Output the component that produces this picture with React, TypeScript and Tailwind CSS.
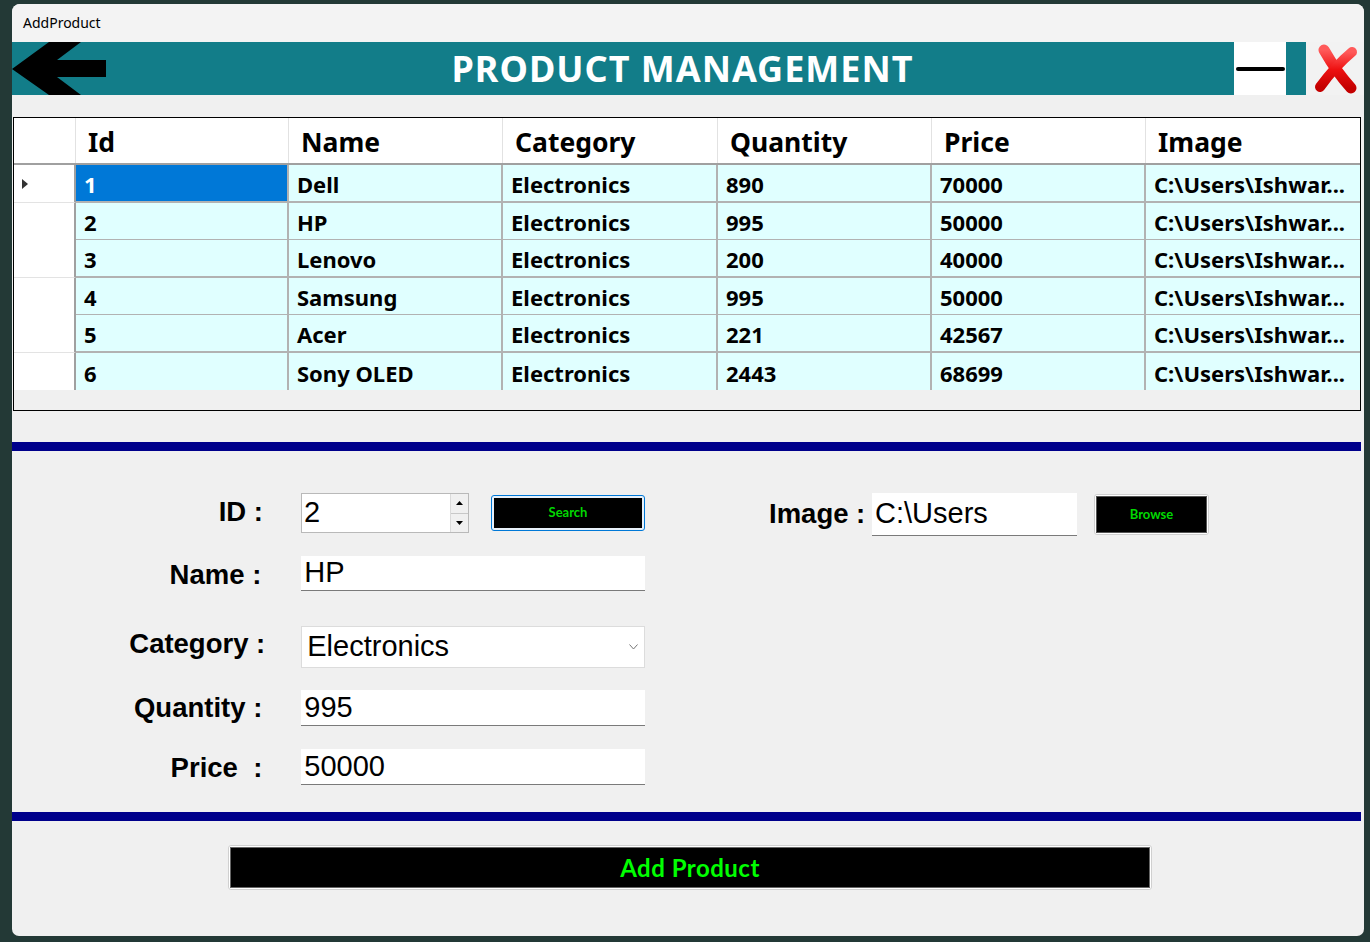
import React from "react";

const rows = [
  ["1", "Dell", "Electronics", "890", "70000"],
  ["2", "HP", "Electronics", "995", "50000"],
  ["3", "Lenovo", "Electronics", "200", "40000"],
  ["4", "Samsung", "Electronics", "995", "50000"],
  ["5", "Acer", "Electronics", "221", "42567"],
  ["6", "Sony OLED", "Electronics", "2443", "68699"],
];

const rowHeights = ["h-[38px]", "h-[37px]", "h-[38px]", "h-[37px]", "h-[38px]", "h-[37px]"];

const headers = ["Id", "Name", "Category", "Quantity", "Price", "Image"];

function Arrow() {
  return (
    <svg width="94" height="53" viewBox="0 0 94 53">
      <polygon points="0,27 37,0 69,0 45,18 94,18 94,35 45,35 69,53 37,53" fill="#000" />
    </svg>
  );
}

function CloseX() {
  return (
    <svg width="58" height="53" viewBox="0 0 58 53">
      <defs>
        <linearGradient id="rg" x1="0" y1="0" x2="0" y2="1">
          <stop offset="0" stopColor="#ff5a5a" />
          <stop offset="0.5" stopColor="#ee1111" />
          <stop offset="1" stopColor="#c40000" />
        </linearGradient>
      </defs>
      <path d="M18 8 C 26 22, 34 34, 45 46" stroke="url(#rg)" strokeWidth="11" strokeLinecap="round" fill="none" />
      <path d="M46 10 C 34 20, 22 34, 14 45" stroke="url(#rg)" strokeWidth="10" strokeLinecap="round" fill="none" />
    </svg>
  );
}

export default function App() {
  const label = "font-['Liberation_Sans',Arial,sans-serif] font-bold text-[27.5px] text-black";
  const inputText = "font-['Liberation_Sans',Arial,sans-serif] text-[29px] text-black";
  return (
    <div className="w-[1370px] h-[942px] bg-[#233936] pt-[4px] pl-[12px] overflow-hidden">
      <div className="w-[1352px] h-[932px] bg-[#f0f0f0] rounded-t-[8px] rounded-b-[7px] flex flex-col overflow-hidden">
        {/* title bar */}
        <div className="h-[38px] bg-[#f3f3f3] pl-[11px] pb-[2px] flex items-center font-['Noto_Sans',sans-serif] text-[14px] text-black">
          AddProduct
        </div>
        {/* header */}
        <div className="h-[53px] flex bg-[#127d89]">
          <div className="w-[94px] h-full">
            <Arrow />
          </div>
          <div className="flex-1 flex items-center justify-center pl-[25px] font-['Noto_Sans',sans-serif] font-bold text-[36px] text-white tracking-[1px]">
            PRODUCT MANAGEMENT
          </div>
          <div className="w-[52px] h-full bg-white flex items-center justify-center">
            <div className="w-[49px] h-[4px] bg-black rounded-full"></div>
          </div>
          <div className="w-[20px] h-full bg-[#127d89]"></div>
          <div className="w-[58px] h-full bg-[#f2f2f2]">
            <CloseX />
          </div>
        </div>
        <div className="h-[22px]"></div>
        {/* table */}
        <div className="ml-[1px] w-[1348px] h-[294px] border border-black bg-[#f0f0f0] font-['Noto_Sans',sans-serif] font-bold">
          <div className="grid grid-cols-[62px_213px_214px_215px_214px_214px_1fr] h-[47px] bg-white border-b-2 border-[#a0a0a0]">
            <div className="border-r border-[#e2e2e2]"></div>
            {headers.map((h, i) => (
              <div key={h} className={`pl-[12px] pt-[4px] flex items-center text-[26.5px] text-black ${i < 5 ? "border-r border-[#e2e2e2]" : ""}`}>
                {h}
              </div>
            ))}
          </div>
          {rows.map((r, ri) => (
            <div key={ri} className={`grid grid-cols-[62px_213px_214px_215px_214px_214px_1fr] ${rowHeights[ri]}`}>
              <div className={`bg-white border-r-2 border-r-[#a0a0a0] flex items-center pl-[8px] ${ri < 5 ? "border-b border-b-[#e3e3e3]" : ""}`}>
                {ri === 0 && (
                  <svg width="6" height="10" viewBox="0 0 6 10">
                    <polygon points="0,0 6,5 0,10" fill="#333" />
                  </svg>
                )}
              </div>
              {[...r, "C:\\Users\\Ishwar..."].map((c, ci) => {
                const sel = ri === 0 && ci === 0;
                return (
                  <div
                    key={ci}
                    className={`flex items-center pl-[8px] pt-[3px] text-[22px] border-[#b2b2b2] ${ri < 5 ? "border-b-2" : ""} ${ci < 5 ? "border-r-2" : ""} ${sel ? "bg-[#0078d7] text-white" : "bg-[#e0ffff] text-black"}`}
                  >
                    {c}
                  </div>
                );
              })}
            </div>
          ))}
        </div>
        {/* blue line */}
        <div className="mt-[31px] w-[1349px] h-[9px] bg-[#00008b]"></div>
        {/* form */}
        <div className="h-[361px] flex">
          <div className="w-[633px] flex flex-col pt-[42px]">
            <div className="h-[40px] flex items-center">
              <div className={`w-[251px] text-right pb-[3px] ${label}`}>ID :</div>
              <div className="ml-[38px] w-[168px] h-[40px] bg-white border border-[#b9b9b9] flex">
                <div className={`flex-1 flex items-center pl-[2px] ${inputText}`}>2</div>
                <div className="w-[18px] flex flex-col border-l border-[#dadada]">
                  <div className="flex-1 flex items-center justify-center bg-[#f0f0f0] border-b border-[#c8c8c8]">
                    <svg width="7" height="4" viewBox="0 0 7 4"><polygon points="0,4 3.5,0 7,4" fill="#000" /></svg>
                  </div>
                  <div className="flex-1 flex items-center justify-center bg-[#f0f0f0]">
                    <svg width="7" height="4" viewBox="0 0 7 4"><polygon points="0,0 7,0 3.5,4" fill="#000" /></svg>
                  </div>
                </div>
              </div>
              <div className="ml-[22px] w-[154px] h-[36px] rounded-[3px] border border-[#0078d7] bg-[#e8f1fa] p-[2px]">
                <div className="w-full h-full bg-black flex items-center justify-center font-['Lato',sans-serif] font-bold text-[13px] text-[#00d800]">
                  Search
                </div>
              </div>
            </div>
            <div className="mt-[23px] h-[35px] flex items-center">
              <div className={`w-[251px] text-right pt-[3px] ${label}`}>Name :</div>
              <div className={`ml-[40px] w-[346px] h-[35px] bg-white border-b border-[#7a7a7a] flex items-center pl-[3px] ${inputText}`}>HP</div>
            </div>
            <div className="mt-[35px] h-[42px] flex items-center">
              <div className={`w-[255px] text-right pb-[7px] ${label}`}>Category :</div>
              <div className={`ml-[36px] w-[346px] h-[42px] bg-white border border-[#dcdcdc] flex items-center pl-[5px] pr-[6px] ${inputText}`}>
                <span className="flex-1">Electronics</span>
                <svg width="9" height="6" viewBox="0 0 9 6"><polyline points="0.5,0.5 4.5,5 8.5,0.5" stroke="#777" strokeWidth="1" fill="none" /></svg>
              </div>
            </div>
            <div className="mt-[22px] h-[36px] flex items-center">
              <div className={`w-[252px] text-right ${label}`}>Quantity :</div>
              <div className={`ml-[39px] w-[346px] h-[36px] bg-white border-b border-[#7a7a7a] flex items-center pl-[3px] ${inputText}`}>995</div>
            </div>
            <div className="mt-[23px] h-[36px] flex items-center">
              <div className={`w-[252px] text-right whitespace-pre pt-[2px] ${label}`}>Price  :</div>
              <div className={`ml-[39px] w-[346px] h-[36px] bg-white border-b border-[#7a7a7a] flex items-center pl-[3px] ${inputText}`}>50000</div>
            </div>
          </div>
          <div className="ml-[124px] pt-[42px]">
            <div className="h-[43px] flex items-center">
              <div className={`w-[103px] pb-[2px] ${label}`}>Image :</div>
              <div className={`w-[205px] h-[43px] bg-white border-b border-[#7a7a7a] flex items-center pl-[3px] ${inputText}`}>C:\Users</div>
              <div className="ml-[17px] w-[115px] h-[41px] rounded-[3px] border border-[#d0d0d0] bg-white p-[1px]">
                <div className="w-full h-full bg-black border border-[#555] flex items-center justify-center font-['Lato',sans-serif] font-bold text-[13px] text-[#00d800]">
                  Browse
                </div>
              </div>
            </div>
          </div>
        </div>
        {/* blue line 2 */}
        <div className="w-[1349px] h-[9px] bg-[#00008b]"></div>
        {/* add button */}
        <div className="mt-[24px] ml-[216px] w-[924px] h-[45px] rounded-[3px] border border-[#d0d0d0] bg-white p-[1px]">
          <div className="w-full h-full bg-black border border-[#666] flex items-center justify-center font-['Lato',sans-serif] font-bold text-[24px] text-[#00ff00] tracking-[0.5px]">
            Add Product
          </div>
        </div>
      </div>
    </div>
  );
}
